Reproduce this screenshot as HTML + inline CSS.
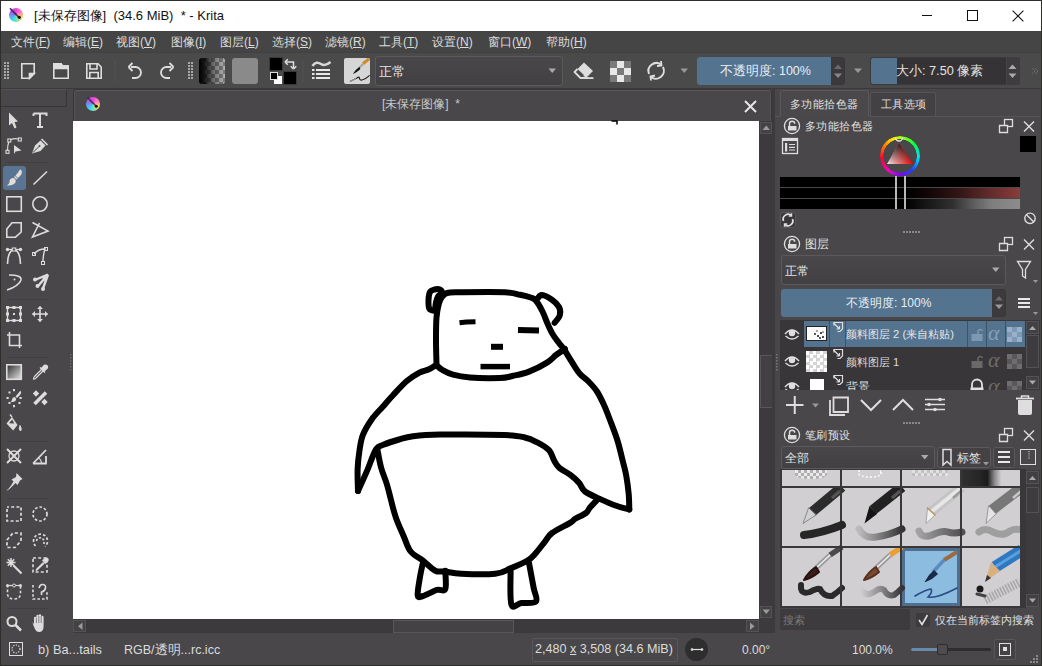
<!DOCTYPE html>
<html><head><meta charset="utf-8">
<style>
*{box-sizing:border-box}
html,body{margin:0;padding:0}
body{width:1042px;height:666px;position:relative;overflow:hidden;background:#2e2e2a;font-family:"Liberation Sans",sans-serif;color:#dcdcdc;font-size:12px}
.a{position:absolute}
.t{position:absolute;white-space:nowrap;line-height:1}
svg{position:absolute;overflow:visible}
</style></head><body>
<!-- window -->
<div class="a" style="left:1px;top:1px;width:1040px;height:664px;background:#494749"></div>
<!-- title bar -->
<div class="a" style="left:1px;top:1px;width:1040px;height:30px;background:#ffffff"></div>
<!-- menu bar -->
<div class="a" style="left:1px;top:31px;width:1040px;height:22px;background:#454545;border-bottom:1px solid #404040"></div>
<!-- toolbar -->
<div class="a" style="left:1px;top:53px;width:1040px;height:36px;background:#4a4a4a;border-bottom:1px solid #3a3a3a"></div>
<!-- left toolbox -->
<div class="a" style="left:1px;top:89px;width:72px;height:544px;background:#494749"></div>
<!-- MDI area -->
<div class="a" style="left:73px;top:89px;width:705px;height:544px;background:#484748"></div>
<!-- canvas header -->
<div class="a" style="left:73px;top:89px;width:699px;height:32px;background:#494749;border:1px solid #383638;border-bottom:none;border-radius:4px 4px 0 0"></div>
<!-- canvas -->
<div class="a" style="left:73px;top:121px;width:687px;height:498px;background:#ffffff"></div>
<!-- right docker -->
<div class="a" style="left:778px;top:89px;width:262px;height:544px;background:#494749"></div>
<!-- status bar -->
<div class="a" style="left:1px;top:633px;width:1040px;height:32px;background:#494749"></div>

<!-- ===== TITLE ===== -->
<div class="a" style="left:9px;top:8px;width:14px;height:14px;border-radius:50%;background:conic-gradient(from 0deg,#f040e0 0deg,#ff80c0 60deg,#ffd060 110deg,#a0e0a0 160deg,#40e0e0 200deg,#60a0f0 260deg,#a060e0 300deg,#f040e0 360deg)"></div>
<svg style="left:0;top:0" width="40" height="32"><path d="M10.5 8.8 L18 16.3" stroke="#3a2050" stroke-width="1.8" stroke-linecap="round" opacity=".85"/><circle cx="19.3" cy="17.3" r="1.6" fill="#111"/></svg>
<div class="t" style="left:34px;top:9px;font-size:13px;color:#111">[未保存图像]&nbsp;&nbsp;(34.6 MiB)&nbsp;&nbsp;* - Krita</div>
<svg style="left:0;top:0" width="1042" height="32">
<path d="M922 15.5 H932" stroke="#111" stroke-width="1"/>
<rect x="967.5" y="10.5" width="10" height="10" fill="none" stroke="#111" stroke-width="1"/>
<path d="M1012.6 10.6 L1023.4 21.4 M1023.4 10.6 L1012.6 21.4" stroke="#111" stroke-width="1.1"/>
</svg>
<!-- ===== MENU ===== -->
<div class="t" style="left:11px;top:36px">文件(<u>F</u>)</div>
<div class="t" style="left:63px;top:36px">编辑(<u>E</u>)</div>
<div class="t" style="left:116px;top:36px">视图(<u>V</u>)</div>
<div class="t" style="left:171px;top:36px">图像(<u>I</u>)</div>
<div class="t" style="left:220px;top:36px">图层(<u>L</u>)</div>
<div class="t" style="left:272px;top:36px">选择(<u>S</u>)</div>
<div class="t" style="left:325px;top:36px">滤镜(<u>R</u>)</div>
<div class="t" style="left:379px;top:36px">工具(<u>T</u>)</div>
<div class="t" style="left:432px;top:36px">设置(<u>N</u>)</div>
<div class="t" style="left:488px;top:36px">窗口(<u>W</u>)</div>
<div class="t" style="left:546px;top:36px">帮助(<u>H</u>)</div>

<!-- ===== TOOLBAR ===== -->
<svg style="left:0;top:0" width="1042" height="90" fill="none" stroke="#dedede" stroke-width="1.6">
<g fill="#a8a8a8" stroke="none">
<rect x="4" y="62" width="2" height="2"/><rect x="7" y="62" width="2" height="2"/>
<rect x="4" y="65" width="2" height="2"/><rect x="7" y="65" width="2" height="2"/>
<rect x="4" y="68" width="2" height="2"/><rect x="7" y="68" width="2" height="2"/>
<rect x="4" y="71" width="2" height="2"/><rect x="7" y="71" width="2" height="2"/>
<rect x="4" y="74" width="2" height="2"/><rect x="7" y="74" width="2" height="2"/>
<rect x="4" y="77" width="2" height="2"/><rect x="7" y="77" width="2" height="2"/>
<rect x="188" y="62" width="2" height="2"/><rect x="191" y="62" width="2" height="2"/>
<rect x="188" y="65" width="2" height="2"/><rect x="191" y="65" width="2" height="2"/>
<rect x="188" y="68" width="2" height="2"/><rect x="191" y="68" width="2" height="2"/>
<rect x="188" y="71" width="2" height="2"/><rect x="191" y="71" width="2" height="2"/>
<rect x="188" y="74" width="2" height="2"/><rect x="191" y="74" width="2" height="2"/>
<rect x="188" y="77" width="2" height="2"/><rect x="191" y="77" width="2" height="2"/>
</g>
<!-- new -->
<path d="M21.8 63.8 H34.2 V73.5 L29.5 78.2 H21.8 Z"/>
<path d="M34.2 73.5 L29.5 78.2 V73.5 Z" fill="#dedede"/>
<!-- open -->
<path d="M53.8 63.8 H61 L62.5 66 H68.2 V78.2 H53.8 Z"/>
<path d="M53.8 63.8 H61 L62.5 66 H68.2 V68.5 H53.8 Z" fill="#dedede"/>
<!-- save -->
<path d="M86.8 63.8 H98 L101.2 67 V78.2 H86.8 Z"/>
<path d="M90 63.8 V69 H97 V63.8"/>
<path d="M89.8 78.2 V72.5 H98.2 V78.2"/>
<!-- separator -->
<path d="M115 60 V82" stroke="#545254" stroke-width="1"/>
<!-- undo -->
<path d="M131 67 H135.5 A5.5 5.5 0 0 1 135.5 78 H132" stroke-width="1.8"/>
<path d="M128.5 67 L132.5 63 M128.5 67 L132.5 71" stroke-width="1.8"/>
<!-- redo -->
<path d="M171 67 H166.5 A5.5 5.5 0 0 0 166.5 78 H170" stroke-width="1.8"/>
<path d="M173.5 67 L169.5 63 M173.5 67 L169.5 71" stroke-width="1.8"/>
<!-- separator -->
<path d="M303 60 V82" stroke="#545254" stroke-width="1"/>
</svg>
<!-- gradient swatch -->
<div class="a" style="left:199px;top:58px;width:26px;height:26px;border-radius:3px;background:linear-gradient(90deg,#000 0%,rgba(0,0,0,.85) 22%,rgba(0,0,0,.35) 60%,rgba(0,0,0,0) 100%),repeating-conic-gradient(#7a7a7a 0 25%,#b4b4b4 0 50%) 0 0/8px 8px"></div>
<!-- pattern swatch -->
<div class="a" style="left:232px;top:58px;width:26px;height:26px;border-radius:3px;background:#8a8a8a"></div>
<!-- fg/bg colors -->
<div class="a" style="left:270px;top:58px;width:12px;height:12px;background:#000;outline:1px solid #3a383a"></div>
<div class="a" style="left:284px;top:72px;width:12px;height:12px;background:#000;outline:1px solid #3a383a"></div>
<div class="a" style="left:274px;top:76px;width:8px;height:8px;background:#fff"></div>
<div class="a" style="left:270px;top:72px;width:8px;height:8px;background:#000;border:1px solid #ddd"></div>
<svg style="left:0;top:0" width="400" height="90" fill="none" stroke="#dedede" stroke-width="1.5">
<path d="M286 62 H293.5 V68"/>
<path d="M285 62 L287.8 59.2 M285 62 L287.8 64.8" />
<path d="M293.5 69 L290.7 66.2 M293.5 69 L296.3 66.2"/>
<!-- brush stroke presets icon -->
<path d="M312.5 66 C315 62,318 62,321 64 C324 66,327 65,330.5 62" stroke-width="2.6" stroke="#d8d8d8"/>
<g fill="#e8e8e8" stroke="none">
<rect x="312" y="69" width="2.5" height="2"/><rect x="316" y="69" width="14" height="2"/>
<rect x="312" y="73" width="2.5" height="2"/><rect x="316" y="73" width="14" height="2"/>
<rect x="312" y="77" width="2.5" height="2"/><rect x="316" y="77" width="14" height="2"/>
</g>
</svg>
<!-- brush preset -->
<div class="a" style="left:344px;top:58px;width:26px;height:26px;border-radius:2px;background:#d6d6d6;overflow:hidden">
<svg style="left:0;top:0" width="26" height="26" fill="none"><path d="M6 23.5 Q10 21.5,13 20 Q15 18.5,15.3 19.5 Q15.5 22.5,18 22 Q22 21,25.6 17.4" stroke="#222" stroke-width="1.2"/><path d="M6 23.5 Q9 22,12 20.5" stroke="#aaa" stroke-width="1"/><path d="M25 0.8 L19 5.7" stroke="#d08a30" stroke-width="3.2"/><path d="M19 5.9 L15.4 9.8" stroke="#a8a8a8" stroke-width="2.2"/><path d="M15.6 9.6 Q12 12.5,10.8 14.4 Q13.5 13,16 10.6" fill="#111" stroke="#111" stroke-width="1.3"/></svg>
</div>
<!-- blend combo -->
<div class="a" style="left:375px;top:56px;width:188px;height:30px;border:1px solid #5b595b;border-radius:3px;background:linear-gradient(#494749,#424042)"></div>
<div class="t" style="left:379px;top:65px;font-size:13px;color:#e4e4e4">正常</div>
<svg style="left:0;top:0" width="1042" height="90">
<path d="M548.5 68.5 H556 L552.25 73 Z" fill="#aaa"/>
<path d="M680.5 68.5 H688 L684.25 73 Z" fill="#999"/>
<path d="M854 68.5 H862 L858 73 Z" fill="#999"/>
</svg>
<!-- eraser -->
<svg style="left:0;top:0" width="700" height="90">
<path d="M584 62.5 L593 71 L586.5 77.5 L577.5 69 Z" fill="#dedede"/>
<path d="M577.5 69 L574.5 72 L580.5 78 H586.5 L583.5 75" fill="none" stroke="#dedede" stroke-width="1.8" stroke-linejoin="round"/>
<path d="M579 71.5 L584.5 77" stroke="#4a4a4a" stroke-width="1"/>
<rect x="585" y="77.2" width="8.5" height="1.8" fill="#dedede"/>
</svg>
<!-- alpha lock checker -->
<div class="a" style="left:610px;top:61px;width:21px;height:21px;background:repeating-conic-gradient(#e8e8e8 0 25%,#7a7a7a 0 50%) 0 0/14px 14px"></div>
<!-- reload -->
<svg style="left:0;top:0" width="700" height="90" fill="none" stroke="#dedede" stroke-width="2">
<path d="M649 74 A8 8 0 0 1 661 64.5"/>
<path d="M663 67 A8 8 0 0 1 651 77"/>
<path d="M661 61 L661.5 65.5 L657 66" stroke-width="1.8"/>
<path d="M651 80.5 L650.5 76.5 L655 75.5" stroke-width="1.8"/>
</svg>
<!-- opacity slider -->
<div class="a" style="left:697px;top:57px;width:148px;height:28px;border:1px solid #393739;border-radius:3px;background:#3b393b"></div>
<div class="a" style="left:697px;top:57px;width:134px;height:28px;border-radius:3px 0 0 3px;background:#53738f"></div>
<div class="t" style="left:720px;top:65px;font-size:12.5px;color:#e8eef4">不透明度: 100%</div>
<svg style="left:0;top:0" width="1042" height="90">
<path d="M834 69 H842 L838 64.5 Z" fill="#6a6969"/>
<path d="M834 73.5 H842 L838 78 Z" fill="#8a8989"/>
</svg>
<!-- size slider -->
<div class="a" style="left:870px;top:57px;width:150px;height:28px;border:1px solid #3b393b;border-radius:3px;background:#353335"></div>
<div class="a" style="left:871px;top:58px;width:26px;height:26px;border-radius:2px 0 0 2px;background:#53738f"></div>
<div class="a" style="left:1006px;top:57px;width:14px;height:28px;border-left:1px solid #444;background:#3e3c3e;border-radius:0 3px 3px 0"></div>
<div class="t" style="left:896px;top:65px;font-size:12.7px;color:#e4e4e4">大小: 7.50 像素</div>
<svg style="left:0;top:0" width="1042" height="90">
<path d="M1008.5 69 H1016.5 L1012.5 64.5 Z" fill="#aaa"/>
<path d="M1008.5 73.5 H1016.5 L1012.5 78 Z" fill="#aaa"/>
<path d="M1032 68 L1035 71 L1032 74 M1035 68 L1038 71 L1035 74" stroke="#666" fill="none"/>
</svg>

<!-- ===== TOOLBOX ===== -->
<div class="a" style="left:1px;top:89px;width:66px;height:18px;border-top:1px solid #555355;border-right:1px solid #373537;border-bottom:1px solid #373537;background:#494749"></div>
<div class="a" style="left:3px;top:166px;width:23px;height:24px;border-radius:3px;background:#5a7594"></div>
<svg style="left:0;top:0" width="80" height="666" fill="none" stroke="#dcdcdc" stroke-width="1.6">
<g stroke="#413f41" stroke-width="1">
<path d="M7 162.5 H48"/><path d="M7 299.5 H48"/><path d="M7 357.5 H48"/><path d="M7 441.5 H48"/><path d="M7 498.5 H48"/><path d="M7 608.5 H48"/>
</g>
<!-- select shapes -->
<path d="M9 112.5 L18 121.5 L14.5 122 L16.5 127.5 L14.5 128.5 L12 123 L9 125.5 Z" fill="#dcdcdc" stroke="none"/>
<!-- text T -->
<path d="M33.5 113.5 V116 M33.5 113.5 H46.5 V116 M40 113.5 V127 M37 127 H43" stroke-width="2"/>
<!-- edit shapes -->
<path d="M7.5 150.3 Q7.5 145,8.8 142 M10.8 139.8 Q14.5 137.8,18.3 139" stroke-width="1.2"/>
<rect x="6" y="150.3" width="3" height="3" stroke-width="1.1"/><rect x="7.8" y="139" width="3" height="3" stroke-width="1.1"/><rect x="18.3" y="138" width="3" height="3" stroke-width="1.1"/>
<path d="M14 145 L21.5 150.5 L15.5 151.5 L14 154 Z" fill="#dcdcdc" stroke="none"/>
<!-- calligraphy pen -->
<path d="M32 153.5 L35 145.5 L40.5 140.5 L45.5 145.5 L40.5 151 Z" fill="#dcdcdc" stroke="none"/>
<path d="M41.5 139 L47.5 145" stroke-width="1.6"/>
<path d="M33 152.5 L39 146.5" stroke="#494749" stroke-width="1"/>
<circle cx="39.5" cy="146" r="1" fill="#494749" stroke="none"/>
<!-- brush -->
<path d="M20.5 169.5 Q23 171,21 175 L18 178 L15.5 175.5 L18.5 172 Q19 169.5,20.5 169.5 Z" fill="#e6dcd6" stroke="none"/>
<path d="M14.5 176.5 L17 179" stroke="#e6dcd6" stroke-width="1.5"/>
<path d="M13.5 178 Q16.5 179.5,15.5 182.5 Q13 186,7 185.5 Q10 183,9.5 181 Q10 178,13.5 178 Z" fill="#e6dcd6" stroke="none"/>
<!-- line -->
<path d="M33.5 184.5 L47 171.5" stroke-width="1.6"/>
<!-- rectangle -->
<rect x="6.8" y="196.8" width="14.5" height="14.5"/>
<!-- ellipse -->
<circle cx="40" cy="204" r="7.2"/>
<!-- polygon -->
<path d="M6.8 229 L12 222.8 H21.2 V232 L15.5 237.2 H6.8 Z"/>
<!-- polyline -->
<path d="M32.5 222.5 L48 231 L32.5 237 L39.5 223"/>
<!-- bezier -->
<path d="M7.5 264 C7.5 245,20.5 245,20.5 264" stroke-width="1.6"/>
<path d="M7 249.5 H21" stroke-width="1.2"/>
<circle cx="7.5" cy="249.5" r="1.7" fill="#dcdcdc" stroke="none"/><circle cx="20.5" cy="249.5" r="1.7" fill="#dcdcdc" stroke="none"/>
<rect x="12.3" y="248" width="3.4" height="3" fill="#4a4949" stroke-width="1.1"/>
<!-- freehand path -->
<path d="M34 254 Q38 249,45 249 Q43 255,43 262" stroke-width="1.4"/>
<rect x="32.5" y="252.5" width="3" height="3" stroke-width="1"/><rect x="44.5" y="247.5" width="3" height="3" stroke-width="1"/><rect x="41.5" y="261.5" width="3" height="3" stroke-width="1"/>
<!-- dynamic brush -->
<path d="M9 275 Q22 275,21 280 Q19 286,7 290" stroke-width="1.6"/>
<circle cx="14.5" cy="279.5" r="1" fill="#dcdcdc" stroke="none"/>
<!-- multibrush -->
<path d="M48 274.5 L36 279.5 M48 274.5 L38.5 285.5 M48 274.5 L43 288.5" stroke-width="2.4"/>
<path d="M48 274 L41 277 L44.5 280.5 Z" fill="#dcdcdc" stroke="none"/>
<circle cx="35" cy="279.5" r="2" fill="#dcdcdc" stroke="none"/><circle cx="37.5" cy="286" r="2" fill="#dcdcdc" stroke="none"/><circle cx="43" cy="289" r="2" fill="#dcdcdc" stroke="none"/>
<!-- transform -->
<rect x="7.5" y="307.5" width="13" height="13" stroke-width="1.4"/>
<g fill="#dcdcdc" stroke="none"><rect x="6" y="306" width="3" height="3"/><rect x="19" y="306" width="3" height="3"/><rect x="6" y="319" width="3" height="3"/><rect x="19" y="319" width="3" height="3"/><rect x="12.5" y="306" width="3" height="3"/><rect x="12.5" y="319" width="3" height="3"/><rect x="6" y="312.5" width="3" height="3"/><rect x="19" y="312.5" width="3" height="3"/><rect x="13" y="313" width="2" height="2"/></g>
<!-- move -->
<path d="M32.5 314 H47.5 M40 306.5 V321.5" stroke-width="1.6"/>
<path d="M32 314 L35 311 V317 Z M48 314 L45 311 V317 Z M40 306 L37 309 H43 Z M40 322 L37 319 H43 Z" fill="#dcdcdc" stroke="none"/>
<!-- crop -->
<path d="M9.5 332 V345.5 H22 M7 335 H19.5 V348" stroke-width="1.6"/>
<!-- gradient -->
<defs><linearGradient id="gr" x1="0" y1="0" x2="1" y2="1"><stop offset="0" stop-color="#2a2a2a"/><stop offset="1" stop-color="#e8e8e8"/></linearGradient></defs>
<rect x="6.8" y="364.8" width="14.5" height="14.5" fill="url(#gr)"/>
<!-- color sampler -->
<path d="M47 365.5 Q48.5 368,45.5 370 L43.5 368 Q45 365,47 365.5 Z" fill="#dcdcdc" stroke="none"/>
<path d="M46.5 364.8 A2.5 2.5 0 0 1 47.8 368.5 L44.5 371.5 L41 368 L44 364.8 A2.5 2.5 0 0 1 46.5 364.8Z" fill="#dcdcdc" stroke="none"/>
<path d="M40 367.5 L45 372.5" stroke-width="1.5"/>
<path d="M43.5 370.5 L36 378 Q34 379.5,33.5 379 Q33 378.5,34.5 376.5 L42 369" stroke-width="1.2"/>
<!-- smart patch -->
<path d="M20.5 391 Q22 392.5,20 395 L17 398 L15.5 396.5 L18.5 393 Q19.5 391,20.5 391 Z" fill="#dcdcdc" stroke="none"/>
<path d="M14.5 397 Q17 398.5,15.8 400.5 Q14 402.5,10.5 402 Q12 400.5,12 399.5 Q12.3 397.2,14.5 397 Z" fill="#dcdcdc" stroke="none"/>
<g fill="#dcdcdc" stroke="none"><rect x="13" y="389" width="2" height="2.2"/><rect x="13" y="405" width="2" height="2.2"/><rect x="6.5" y="397" width="2.2" height="2"/><rect x="19.5" y="397" width="2.2" height="2"/><rect x="8.5" y="391.5" width="2" height="2"/><rect x="18.5" y="402" width="2" height="2"/><rect x="8.5" y="402" width="2" height="2"/></g>
<!-- heal -->
<path d="M32.8 393.5 L36 390.3 L39.2 393.5 L36 396.7 Z M41.3 402 L44.5 398.8 L47.7 402 L44.5 405.2 Z" fill="#dcdcdc" stroke="none"/>
<path d="M34.5 404 L46 392.5" stroke-width="3.6"/>
<!-- fill -->
<path d="M6.5 423.5 L12 417 L17.5 425 L13.2 430.5 Z" fill="#dcdcdc" stroke="none"/>
<path d="M9 423.2 L12.2 419.6 L14.3 423.4 Z" fill="#4a4949" stroke="none"/>
<path d="M12 417 L10 414.5" stroke-width="1.4"/>
<path d="M20 425.5 Q21.8 428.5,21 430.5 Q19.5 431,19.3 428.5 Z" fill="#dcdcdc" stroke-width="1"/>
<!-- assistant tool -->
<circle cx="14" cy="456" r="5" stroke-width="1.3"/>
<path d="M7 449 L21 463 M21 449 L7 463" stroke-width="2"/>
<!-- measure -->
<path d="M33 463.5 L46 450 M33 463.5 H46 V456" stroke-width="1.8"/>
<path d="M38 458 Q41 459,41.5 463" stroke-width="1.2"/>
<!-- reference pin -->
<path d="M16.5 473 L22.5 479 L20 480.5 L17.5 485 L15.5 483 L8 490.5 L13.5 481.5 L11.5 479.5 L16 477 Z" fill="#dcdcdc" stroke="none"/>
<path d="M7 490.5 L13 484.5" stroke-width="0.8"/>
<!-- rect select -->
<rect x="7" y="507" width="14" height="14" stroke-dasharray="3 2.2" stroke-dashoffset="1" stroke-width="1.7"/>
<!-- ellipse select -->
<circle cx="40" cy="514" r="7" stroke-dasharray="2.6 2" stroke-width="1.7"/>
<!-- polygon select -->
<path d="M7 540 L13 533 H21 V541 L15 547.5 H7 Z" stroke-dasharray="3.2 2.3" stroke-width="1.7"/>
<!-- freehand select -->
<path d="M35.5 546 A7 7 0 1 1 45 546.5" stroke-dasharray="2.6 2" stroke-width="1.7"/>
<path d="M36.5 541 A3.8 3.8 0 0 1 44 541 V544" stroke-dasharray="2.2 1.6" stroke-width="1.6"/>
<!-- contiguous select -->
<path d="M13.5 565.5 L21.5 573.5" stroke-width="2.2"/>
<path d="M6.5 562.5 H15.5 M11 558 V567 M7.8 559.3 L14.2 565.7 M14.2 559.3 L7.8 565.7" stroke-width="1.5"/>
<!-- similar select -->
<rect x="33" y="558" width="14" height="14" stroke-dasharray="3 2.2" stroke-width="1.6"/>
<path d="M46 557.5 A2.5 2.5 0 0 1 48.5 561 L45.5 564 L42 560.5 L45 557.8 Z" fill="#dcdcdc" stroke="none"/>
<path d="M43.5 562.5 L37 569 L36 570.5 L37.5 569.5 L44.2 563" stroke-width="1.3"/>
<!-- bezier select -->
<path d="M7.5 585 V594 Q8 599,14 599 Q20 599,20.5 594 V585" stroke-dasharray="2.6 2" stroke-width="1.6"/>
<path d="M7 585.5 H21" stroke-width="1.2"/><circle cx="7.5" cy="585.5" r="1.5" fill="#dcdcdc" stroke="none"/><circle cx="20.5" cy="585.5" r="1.5" fill="#dcdcdc" stroke="none"/><circle cx="14" cy="585.5" r="1.5" fill="#494749" stroke-width="1"/>
<!-- magnetic select -->
<path d="M33 585 V599 H47 V592" stroke-dasharray="2.6 2" stroke-width="1.6"/>
<path d="M39 588 Q40 584,43 584.5 Q46 585,45.5 588 Q45 591,41.5 592 V595" stroke-width="1.6"/>
<!-- zoom -->
<circle cx="12" cy="621.5" r="4.5" stroke-width="2"/>
<path d="M15.5 625 L21 630.5" stroke-width="2.6"/>
<!-- hand -->
<path d="M34 624 V618 Q34 616.8,35.2 616.8 Q36.4 616.8,36.4 618 V622 V616 Q36.4 614.8,37.6 614.8 Q38.8 614.8,38.8 616 V622 V615.5 Q38.8 614.3,40 614.3 Q41.2 614.3,41.2 615.5 V622 V617 Q41.2 615.8,42.4 615.8 Q43.6 615.8,43.6 617 V626 Q43.6 632,39 632 Q36 632,34.5 628 Q33 625,32.5 622 Z" fill="#dcdcdc" stroke="none"/>
<path d="M36.4 618 V623 M38.8 616 V623 M41.2 616 V623" stroke="#494749" stroke-width="0.6"/>
<!-- splitter dots right of toolbox -->
<g fill="#6a6969" stroke="none">
<rect x="70" y="354" width="1.5" height="1.5"/><rect x="70" y="357" width="1.5" height="1.5"/><rect x="70" y="360" width="1.5" height="1.5"/><rect x="70" y="363" width="1.5" height="1.5"/><rect x="70" y="366" width="1.5" height="1.5"/><rect x="70" y="369" width="1.5" height="1.5"/>
</g>
</svg>

<!-- ===== CANVAS HEADER ===== -->
<div class="a" style="left:74px;top:90px;width:697px;height:31px;border-top:1px solid #595759;border-left:1px solid #545254;border-right:1px solid #545254;border-radius:3px 3px 0 0"></div>
<div class="a" style="left:86px;top:97px;width:14px;height:14px;border-radius:50%;background:conic-gradient(from 0deg,#f040e0 0deg,#ff80c0 60deg,#ffd060 110deg,#a0e0a0 160deg,#40e0e0 200deg,#60a0f0 260deg,#a060e0 300deg,#f040e0 360deg)"></div>
<svg style="left:0;top:0" width="800" height="130"><path d="M88 98 L95 105" stroke="#3a2050" stroke-width="1.7" stroke-linecap="round" opacity=".85"/><circle cx="96.3" cy="106.3" r="1.5" fill="#111"/>
<path d="M745 101 L756 112 M756 101 L745 112" stroke="#e6e6e6" stroke-width="2"/></svg>
<div class="t" style="left:382px;top:98px;font-size:12px;color:#c8c8c8">[未保存图像]&nbsp;&nbsp;*</div>
<!-- scrollbars -->
<div class="a" style="left:759px;top:121px;width:14px;height:498px;background:#3c3a3c"></div>
<div class="a" style="left:760px;top:122px;width:12px;height:12px;border:1px solid #545254;background:#444244"></div>
<div class="a" style="left:760px;top:606px;width:12px;height:12px;border:1px solid #545254;background:#444244"></div>
<div class="a" style="left:760px;top:355px;width:13px;height:53px;border:1px solid #595759;background:#424042"></div>
<div class="a" style="left:73px;top:619px;width:700px;height:14px;background:#3c3a3c"></div>
<div class="a" style="left:73px;top:620px;width:13px;height:12px;border:1px solid #545254;background:#444244"></div>
<div class="a" style="left:746px;top:620px;width:13px;height:12px;border:1px solid #545254;background:#444244"></div>
<div class="a" style="left:393px;top:620px;width:121px;height:13px;border:1px solid #595759;background:#444244"></div>
<svg style="left:0;top:0" width="800" height="640">
<path d="M762.5 130 H770 L766.25 125.5 Z" fill="#9a9a9a"/>
<path d="M762.5 609.5 H770 L766.25 614 Z" fill="#9a9a9a"/>
<path d="M82.5 622.5 V630 L78 626.25 Z" fill="#9a9a9a"/>
<path d="M750 622.5 V630 L754.5 626.25 Z" fill="#9a9a9a"/>
<g fill="#777" ><rect x="776" y="354" width="1.5" height="1.5"/><rect x="776" y="357" width="1.5" height="1.5"/><rect x="776" y="360" width="1.5" height="1.5"/><rect x="776" y="363" width="1.5" height="1.5"/><rect x="776" y="366" width="1.5" height="1.5"/><rect x="776" y="369" width="1.5" height="1.5"/></g>
</svg>
<!-- ===== DRAWING ===== -->
<svg style="left:0;top:0" width="800" height="640" fill="none" stroke="#000" stroke-width="6" stroke-linecap="round" stroke-linejoin="round">
<path d="M612 121 H617 V124" stroke-width="1.5"/>
<path d="M435.0 311.0 C434.1 310.7 430.6 310.8 429.5 309.0 C428.4 307.2 428.4 302.8 428.5 300.0 C428.6 297.2 429.0 293.8 430.0 292.0 C431.0 290.2 432.8 289.9 434.5 289.5 C436.2 289.1 438.8 289.0 440.0 289.5 C441.2 290.0 442.3 291.3 442.0 292.5 C441.7 293.7 439.0 294.8 438.0 296.5 C437.0 298.2 436.5 300.2 436.0 302.5 C435.5 304.8 435.2 308.8 435.0 310.0"/>
<path d="M436.5 364.0 C436.4 360.0 436.0 347.8 436.0 340.0 C436.0 332.2 436.0 323.5 436.5 317.5 C437.0 311.5 437.9 307.4 438.8 304.0 C439.7 300.6 440.6 298.8 442.0 297.0 C443.4 295.2 444.0 293.8 447.0 293.0 C450.0 292.2 450.3 292.4 460.0 292.3 C469.7 292.2 495.0 291.9 505.0 292.3 C515.0 292.7 515.7 293.9 520.0 294.8 C524.3 295.7 528.0 296.6 530.6 297.5 C533.2 298.4 533.8 298.2 535.8 300.5 C537.8 302.8 540.5 307.5 542.5 311.5 C544.5 315.5 546.0 320.4 547.8 324.3 C549.5 328.2 551.1 331.7 553.0 334.8 C554.9 337.9 557.1 340.5 559.0 343.0 C560.9 345.5 562.0 346.5 564.3 349.8 C566.5 353.1 569.9 359.0 572.5 363.0 C575.1 367.0 577.2 370.8 580.0 374.0 C582.8 377.2 586.2 379.1 589.0 382.0 C591.8 384.9 594.5 387.7 597.0 391.5 C599.5 395.3 601.8 400.2 604.0 405.0 C606.2 409.8 607.8 414.2 610.0 420.0 C612.2 425.8 615.2 433.3 617.3 440.0 C619.4 446.7 621.0 454.0 622.5 460.0 C624.0 466.0 625.3 470.3 626.3 476.0 C627.3 481.7 628.2 488.4 628.7 494.0 C629.2 499.6 629.2 506.9 629.3 509.5"/>
<path d="M629.3 509.5 C626.8 508.8 618.9 506.8 614.0 505.0 C609.1 503.2 604.8 501.2 600.0 499.0 C595.2 496.8 588.5 494.2 585.0 491.5 C581.5 488.8 581.5 485.7 579.2 483.0 C576.9 480.3 574.4 478.0 571.0 475.4 C567.6 472.8 561.8 469.9 559.0 467.4 C556.2 464.9 555.7 463.2 554.0 460.3 C552.3 457.4 551.9 453.2 549.0 450.2 C546.1 447.2 540.8 444.3 536.8 442.2 C532.8 440.1 530.2 438.7 524.8 437.5 C519.4 436.3 518.7 435.5 504.6 435.0 C490.5 434.5 455.3 434.4 440.0 434.6 C424.7 434.8 419.8 435.4 413.0 436.2 C406.2 437.0 403.8 438.1 399.0 439.5 C394.2 440.9 387.8 442.9 384.0 444.6 C380.2 446.3 378.9 445.0 376.0 449.5 C373.1 454.0 369.8 464.5 366.8 471.4 C363.8 478.3 359.5 487.7 358.0 491.0"/>
<path d="M358.0 491.0 C357.9 487.4 357.4 476.1 357.6 469.3 C357.9 462.5 358.6 456.2 359.5 450.4 C360.4 444.6 360.9 439.9 363.0 434.7 C365.1 429.5 368.7 423.7 372.0 419.0 C375.3 414.3 379.5 410.5 383.0 406.5 C386.5 402.5 389.0 399.4 393.0 395.2 C397.0 390.9 402.4 384.8 406.8 381.0 C411.2 377.2 415.7 374.6 419.4 372.6 C423.1 370.7 426.2 370.6 429.0 369.3 C431.8 368.0 434.8 365.7 436.0 365.0"/>
<path d="M436.0 365.0 C437.1 365.8 439.7 368.4 442.5 370.0 C445.3 371.6 448.4 373.4 453.0 374.6 C457.6 375.9 462.2 376.9 470.0 377.5 C477.8 378.1 492.9 378.2 500.0 378.0 C507.1 377.8 507.7 377.1 512.5 376.0 C517.3 374.9 523.2 373.8 529.0 371.6 C534.8 369.4 542.5 365.4 547.0 362.6 C551.5 359.8 553.0 357.3 556.0 355.0 C559.0 352.7 563.5 350.0 565.0 349.0"/>
<path d="M538.0 298.0 C538.6 297.5 539.5 294.8 541.8 295.0 C544.1 295.2 548.7 297.5 551.6 299.5 C554.5 301.5 557.6 304.4 559.0 307.0 C560.4 309.6 560.5 312.7 559.8 315.3 C559.1 317.9 555.5 321.6 554.6 322.8"/>
<path d="M377.5 450.0 C378.1 453.0 379.6 462.3 381.2 468.0 C382.8 473.7 385.2 478.7 386.8 484.0 C388.4 489.3 389.5 494.3 391.0 500.0 C392.5 505.7 393.8 511.8 396.0 518.0 C398.2 524.2 401.6 531.4 404.0 537.0 C406.4 542.6 407.5 547.5 410.7 551.5 C413.9 555.5 418.9 557.5 423.0 560.7 C427.1 563.9 431.7 568.9 435.3 570.7 C438.9 572.5 440.1 571.0 444.5 571.5 C448.9 572.0 452.9 573.4 461.4 573.8 C469.8 574.2 487.0 574.7 495.2 573.8 C503.4 572.9 505.2 570.6 510.6 568.4 C516.0 566.2 523.4 563.1 527.5 560.7 C531.6 558.3 532.4 556.9 535.2 553.8 C538.0 550.7 541.6 545.8 544.4 542.3 C547.2 538.8 547.6 536.3 552.0 533.0 C556.4 529.7 566.6 525.0 570.5 522.6 C574.4 520.2 572.6 520.4 575.2 518.8 C577.8 517.2 583.5 514.9 586.0 513.0 C588.5 511.1 588.0 509.8 590.0 507.5 C592.0 505.2 596.7 500.4 598.0 499.0"/>
<path d="M423.0 562.3 C422.5 564.7 420.9 571.4 420.0 576.9 C419.1 582.4 417.2 592.1 417.7 595.3 C418.2 598.5 419.8 596.9 423.0 596.0 C426.2 595.1 433.2 591.0 436.9 589.9 C440.6 588.8 443.9 592.3 445.3 589.1 C446.7 585.9 445.3 573.8 445.3 570.7"/>
<path d="M510.6 570.7 C510.7 576.3 509.6 599.1 511.4 604.5 C513.2 609.9 517.2 603.5 521.3 603.0 C525.4 602.5 534.0 604.0 536.0 601.4 C538.0 598.8 534.8 594.0 533.6 587.6 C532.4 581.2 529.8 567.1 529.0 563.0"/>
<path d="M459.5 322.8 L466.5 322 L475.5 321.8" stroke-width="5" stroke-linecap="butt"/>
<path d="M518 330 L539 330.5" stroke-width="6" stroke-linecap="butt"/>
<path d="M491 346.8 H503" stroke-width="6" stroke-linecap="butt"/>
<path d="M480.5 366.6 H510" stroke-width="5.5" stroke-linecap="butt"/>
</svg>

<!-- ===== RIGHT DOCKER ===== -->
<div class="a" style="left:772px;top:89px;width:3px;height:544px;background:#3c3a3c"></div>
<!-- tabs -->
<div class="a" style="left:780px;top:90px;width:89px;height:27px;border:1px solid #5a585a;border-bottom:none;border-radius:3px 3px 0 0;background:#4a484a"></div>
<div class="a" style="left:870px;top:92px;width:66px;height:24px;border:1px solid #565456;border-bottom:none;border-radius:3px 3px 0 0;background:#434143"></div>
<div class="a" style="left:775px;top:116px;width:265px;height:1px;background:#565456"></div>
<div class="a" style="left:780px;top:116px;width:89px;height:1px;background:#4a484a"></div>
<div class="t" style="left:790px;top:99px;font-size:11px;letter-spacing:0.4px;color:#e0e0e0">多功能拾色器</div>
<div class="t" style="left:881px;top:99px;font-size:11px;letter-spacing:0.4px;color:#e0e0e0">工具选项</div>
<!-- docker title icons -->
<svg style="left:0;top:0" width="1042" height="640" fill="none" stroke="#dedede" stroke-width="1.3">
<!-- lock icons -->
<g id="lk">
<circle cx="792" cy="126" r="7.6"/>
<path d="M789.5 126 V123.8 A2.6 2.6 0 0 1 794.7 123.8" stroke-width="1.4"/>
<rect x="788" y="126" width="8.5" height="4.5" fill="#dedede" stroke="none"/>
</g>
<use href="#lk" y="118"/>
<use href="#lk" y="309"/>
<!-- float + close -->
<g id="fc">
<rect x="1004.5" y="119.5" width="8" height="7"/>
<path d="M999.5 125.5 H1007.5 V132.5 H999.5 Z" fill="#4a484a"/>
<path d="M1024 121.5 L1034 131.5 M1034 121.5 L1024 131.5" stroke-width="1.4"/>
</g>
<use href="#fc" y="118"/>
<use href="#fc" y="309"/>
<!-- settings icon -->
<rect x="782.5" y="138.5" width="15" height="15"/>
<rect x="782.5" y="138.5" width="15" height="2.5" fill="#dedede" stroke="none"/>
<rect x="785" y="143" width="2.2" height="8.5" fill="#dedede" stroke="none"/>
<path d="M789 144.5 H795 M789 147.3 H795 M789 150 H795" stroke-width="1.2"/>
</svg>
<!-- color wheel -->
<div class="a" style="left:880px;top:136px;width:40px;height:40px;border-radius:50%;background:conic-gradient(from 0deg,#b0ff00 0deg,#00ff40 50deg,#00e0ff 95deg,#2040ff 140deg,#8000ff 180deg,#ff00c0 220deg,#ff0030 262deg,#ff8000 305deg,#ffe000 335deg,#b0ff00 360deg);-webkit-mask:radial-gradient(circle,transparent 16.5px,#000 17px);mask:radial-gradient(circle,transparent 16.5px,#000 17px)"></div>
<svg style="left:0;top:0" width="1042" height="640">
<defs>
<linearGradient id="tri1" x1="0" y1="1" x2="1" y2="1"><stop offset="0" stop-color="#f4e8e8"/><stop offset="1" stop-color="#e80000"/></linearGradient>
<linearGradient id="tri2" x1="0.5" y1="0" x2="0.5" y2="1"><stop offset="0" stop-color="#000"/><stop offset="1" stop-color="rgba(0,0,0,0)"/></linearGradient>
</defs>
<path d="M899 143 L913.5 164 H887 Z" fill="url(#tri1)"/>
<path d="M899 143 L913.5 164 H887 Z" fill="url(#tri2)" opacity="0.8"/>
<path d="M895.5 137.5 A3.5 3.5 0 0 0 902.5 137.5" fill="none" stroke="#e8e8e8" stroke-width="1.3"/>
</svg>
<div class="a" style="left:1020px;top:136px;width:16px;height:16px;background:#000"></div>
<!-- bars -->
<div class="a" style="left:780px;top:177px;width:240px;height:10px;background:#000"></div>
<div class="a" style="left:780px;top:188px;width:240px;height:10px;background:linear-gradient(90deg,#000 0%,#000 52%,#120606 62%,#351616 75%,#642c2c 88%,#8a3c3c 100%)"></div>
<div class="a" style="left:780px;top:199px;width:240px;height:10px;background:linear-gradient(90deg,#000 0%,#000 52%,#141414 60%,#303030 72%,#5a5a5a 80%,#7e7e7e 88%,#8c8c8c 100%)"></div>
<div class="a" style="left:895px;top:176px;width:11px;height:33px;border-left:2px solid #b8b8b8;border-right:2px solid #b8b8b8"></div>
<div class="a" style="left:780px;top:212px;width:16px;height:16px;border-radius:3px;background:#393739;border:1px solid #595759"></div>
<svg style="left:0;top:0" width="1042" height="640" fill="none" stroke="#dedede" stroke-width="1.8">
<path d="M783.5 221 A5 5 0 0 1 791.5 215.5"/>
<path d="M792.5 219 A5 5 0 0 1 784.5 224.5"/>
<path d="M791.5 213.2 V216 H788.8 M784.5 226.8 V224 H787.2" stroke-width="1.5"/>
<circle cx="1030" cy="218.3" r="5.2" stroke-width="1.4"/>
<path d="M1026.5 214.8 L1033.5 221.8" stroke-width="1.4"/>
<g fill="#8a8989" stroke="none">
<rect x="903" y="231" width="2" height="2"/><rect x="906" y="231" width="2" height="2"/><rect x="909" y="231" width="2" height="2"/><rect x="912" y="231" width="2" height="2"/><rect x="915" y="231" width="2" height="2"/><rect x="918" y="231" width="2" height="2"/>
<rect x="903" y="422" width="2" height="2"/><rect x="906" y="422" width="2" height="2"/><rect x="909" y="422" width="2" height="2"/><rect x="912" y="422" width="2" height="2"/><rect x="915" y="422" width="2" height="2"/><rect x="918" y="422" width="2" height="2"/>
</g>
</svg>
<!-- layers title -->
<div class="t" style="left:805px;top:238px;font-size:12px;color:#e0e0e0">图层</div>
<div class="a" style="left:781px;top:255px;width:225px;height:30px;border:1px solid #5b595b;border-radius:3px;background:linear-gradient(#494749,#424042)"></div>
<div class="t" style="left:785px;top:265px;font-size:12px;color:#e4e4e4">正常</div>
<div class="a" style="left:781px;top:289px;width:225px;height:28px;border:1px solid #393739;border-radius:3px;background:#3c3a3c"></div>
<div class="a" style="left:781px;top:289px;width:211px;height:28px;border-radius:3px 0 0 3px;background:#53738f"></div>
<div class="t" style="left:846px;top:297px;font-size:12px;color:#e8eef4">不透明度: 100%</div>
<svg style="left:0;top:0" width="1042" height="640">
<path d="M992 267.5 H999.5 L995.75 272 Z" fill="#aaa"/>
<path d="M995 300.5 H1003 L999 296 Z" fill="#6a6969"/>
<path d="M995 304.5 H1003 L999 309 Z" fill="#9a9a9a"/>
<path d="M1017.5 261.5 H1030.5 L1025.5 269.5 V278 L1022.5 276 V269.5 Z" fill="none" stroke="#dedede" stroke-width="1.3"/>
<path d="M1033 280 H1038 L1035.5 283 Z" fill="#999"/>
<path d="M1018 299 H1030 M1018 303 H1030 M1018 307 H1030" stroke="#e8e8e8" stroke-width="2"/>
<path d="M1033 312 H1038 L1035.5 315 Z" fill="#999"/>
</svg>

<div class="t" style="left:805px;top:121px;font-size:11px;letter-spacing:0.4px;color:#e0e0e0">多功能拾色器</div>
<!-- ===== LAYERS LIST ===== -->
<div class="a" style="left:780px;top:320px;width:260px;height:70px;background:#383638"></div>
<div class="a" style="left:804px;top:321px;width:221px;height:26px;background:#53738f"></div>
<div class="a" style="left:829px;top:321px;width:1px;height:26px;background:#3f5366"></div>
<div class="a" style="left:845px;top:321px;width:1px;height:26px;background:#3f5366"></div>
<div class="a" style="left:967px;top:321px;width:1px;height:26px;background:#3f5366"></div>
<div class="a" style="left:986px;top:321px;width:1px;height:26px;background:#3f5366"></div>
<div class="a" style="left:1005px;top:321px;width:1px;height:26px;background:#3f5366"></div>
<!-- thumbs -->
<div class="a" style="left:806px;top:326px;width:21px;height:15px;background:#fafafa;border:1px solid #222"></div>
<svg style="left:0;top:0" width="1042" height="640">
<g fill="#111"><circle cx="815" cy="334" r="0.9"/><circle cx="818" cy="336" r="1"/><circle cx="821" cy="333" r="1"/><circle cx="820" cy="338" r="0.9"/><circle cx="823" cy="337" r="1"/><circle cx="817" cy="331" r="0.7"/><circle cx="823" cy="332" r="0.7"/></g>
</svg>
<div class="a" style="left:806px;top:351px;width:21px;height:21px;background:repeating-conic-gradient(#d4d4d4 0 25%,#ffffff 0 50%) 0 0/7px 7px"></div>
<div class="a" style="left:810px;top:379px;width:14px;height:11px;background:#fff"></div>
<div class="t" style="left:846px;top:329px;font-size:11.2px;color:#e6e6e6">颜料图层 2 (来自粘贴)</div>
<div class="t" style="left:846px;top:357px;font-size:11.2px;color:#dcdcdc">颜料图层 1</div>
<div class="a" style="left:780px;top:374px;width:246px;height:16px;overflow:hidden"><div class="t" style="left:66px;top:7px;font-size:12px;color:#dcdcdc">背景</div></div>
<svg style="left:0;top:0" width="1042" height="640" fill="none" stroke="#dedede" stroke-width="1.3">
<defs><clipPath id="lc"><rect x="780" y="320" width="246" height="70"/></clipPath></defs>
<g clip-path="url(#lc)">
<g id="eye">
<path d="M785 334 Q792 326,799 334" stroke-width="1.6"/>
<path d="M785.5 336 Q792 342,798.5 336" stroke-width="1.3"/>
<circle cx="792" cy="333" r="3.2" fill="#dedede" stroke="none"/>
</g>
<use href="#eye" y="27"/>
<use href="#eye" y="53"/>
<g id="inh">
<path d="M834 325.5 V322.5 H842.5 V329 L840 331.5 H837.5" stroke-width="1.2"/>
<path d="M833.5 323 L839.5 329 M839.5 329 V326 M839.5 329 H836.5" stroke-width="1.2"/>
</g>
<use href="#inh" y="27"/>
<use href="#inh" y="53"/>
<!-- lock col -->
<path d="M971.5 334 H982.5 V341 H971.5 Z" fill="#7f98b2" stroke="none"/>
<path d="M978 334 V331 A2.5 2.5 0 0 1 982.5 331" stroke="#7f98b2" stroke-width="1.5"/>
<path d="M971.5 361 H982.5 V368 H971.5 Z" fill="#6a6969" stroke="none"/>
<path d="M978 361 V358 A2.5 2.5 0 0 1 982.5 358" stroke="#6a6969" stroke-width="1.5"/>
<path d="M972 388 V384.5 A5 5 0 0 1 982 384.5 V388" stroke="#e0e0e0" stroke-width="1.8"/>
<rect x="970.5" y="387.5" width="13" height="3" fill="#e0e0e0" stroke="none"/>
</g>
</svg>
<div class="t" style="left:988px;top:322px;font-size:22px;font-style:italic;color:#86a0bb;font-family:'Liberation Serif',serif">α</div>
<div class="t" style="left:988px;top:349px;font-size:22px;font-style:italic;color:#6e6d6d;font-family:'Liberation Serif',serif">α</div>
<div class="a" style="left:980px;top:374px;width:46px;height:16px;overflow:hidden"><div class="t" style="left:8px;top:1px;font-size:22px;font-style:italic;color:#6e6d6d;font-family:'Liberation Serif',serif">α</div></div>
<div class="a" style="left:1007px;top:327px;width:15px;height:15px;background:repeating-conic-gradient(#7d99b5 0 25%,#99b0c8 0 50%) 0 0/10px 10px"></div>
<div class="a" style="left:1007px;top:354px;width:15px;height:15px;background:repeating-conic-gradient(#595759 0 25%,#6f6e6e 0 50%) 0 0/10px 10px"></div>
<div class="a" style="left:1007px;top:381px;width:15px;height:9px;background:repeating-conic-gradient(#595759 0 25%,#6f6e6e 0 50%) 0 0/10px 10px"></div>
<!-- layer scrollbar -->
<div class="a" style="left:1026px;top:320px;width:14px;height:70px;background:#393739"></div>
<div class="a" style="left:1026px;top:321px;width:13px;height:13px;border:1px solid #545254;background:#424042"></div>
<div class="a" style="left:1026px;top:335px;width:13px;height:33px;border:1px solid #545254;background:#3e3c3e"></div>
<div class="a" style="left:1026px;top:376px;width:13px;height:13px;border:1px solid #545254;background:#424042"></div>
<svg style="left:0;top:0" width="1042" height="640">
<path d="M1029 330 H1036 L1032.5 326 Z" fill="#aaa"/>
<path d="M1029 380.5 H1036 L1032.5 384.5 Z" fill="#aaa"/>
</svg>
<!-- layer bottom toolbar -->
<svg style="left:0;top:0" width="1042" height="640" fill="none" stroke="#dedede" stroke-width="2">
<path d="M786 405 H803.5 M794.75 396 V414"/>
<path d="M812 403.5 H819 L815.5 407.5 Z" fill="#999" stroke="none"/>
<path d="M833.5 397.5 H848 V412 H833.5 Z" stroke-width="1.8"/>
<path d="M830 400 V415 H845" stroke-width="1.8"/>
<path d="M861 400 L871 410 L881 400"/>
<path d="M893 410 L903 400 L913 410"/>
<path d="M925 399.5 H945 M925 404.5 H945 M925 409.5 H945" stroke-width="1.5"/>
<g fill="#dedede" stroke="none"><circle cx="940" cy="399.5" r="1.8"/><circle cx="929" cy="404.5" r="1.8"/><circle cx="935" cy="409.5" r="1.8"/></g>
<path d="M1016 398.5 H1034" stroke-width="1.8"/>
<path d="M1021.5 398 V396 H1028.5 V398" stroke-width="1.5"/>
<path d="M1018 400 H1032 V413 Q1032 415,1030 415 H1020 Q1018 415,1018 413 Z" fill="#dedede" stroke="none"/>
</svg>

<!-- ===== BRUSH PRESETS ===== -->
<div class="t" style="left:805px;top:430px;font-size:11px;letter-spacing:0.4px;color:#e0e0e0">笔刷预设</div>
<div class="a" style="left:781px;top:446px;width:154px;height:23px;border:1px solid #5b595b;border-radius:3px;background:linear-gradient(#494749,#424042)"></div>
<div class="t" style="left:785px;top:452px;font-size:12px;color:#e4e4e4">全部</div>
<div class="a" style="left:937px;top:447px;width:54px;height:21px;border:1px solid #5b595b;border-radius:3px;background:#444244"></div>
<div class="t" style="left:957px;top:452px;font-size:12px;color:#e4e4e4">标签</div>
<div class="a" style="left:993px;top:447px;width:22px;height:21px;border:1px solid #5b595b;border-radius:3px;background:#444244"></div>
<div class="a" style="left:1020px;top:449px;width:16px;height:16px;border:1.3px solid #dedede"></div>
<div class="a" style="left:780px;top:469px;width:246px;height:139px;background:#393739"></div>
<div class="a" style="left:782px;top:470px;width:58px;height:16px;background:#d1cfd2"></div>
<div class="a" style="left:842px;top:470px;width:58px;height:16px;background:#d1cfd2"></div>
<div class="a" style="left:902px;top:470px;width:58px;height:16px;background:#d1cfd2"></div>
<div class="a" style="left:962px;top:470px;width:58px;height:16px;background:#d1cfd2"></div>
<div class="a" style="left:782px;top:488px;width:58px;height:58px;background:#d1cfd2"></div>
<div class="a" style="left:842px;top:488px;width:58px;height:58px;background:#d1cfd2"></div>
<div class="a" style="left:902px;top:488px;width:58px;height:58px;background:#d1cfd2"></div>
<div class="a" style="left:962px;top:488px;width:58px;height:58px;background:#d1cfd2"></div>
<div class="a" style="left:782px;top:548px;width:58px;height:58px;background:#d1cfd2"></div>
<div class="a" style="left:842px;top:548px;width:58px;height:58px;background:#d1cfd2"></div>
<div class="a" style="left:902px;top:548px;width:58px;height:58px;background:#d1cfd2"></div>
<div class="a" style="left:962px;top:548px;width:58px;height:58px;background:#d1cfd2"></div>

<div class="a" style="left:902px;top:548px;width:58px;height:58px;background:#4f6f90"></div>
<div class="a" style="left:905px;top:551px;width:52px;height:52px;background:#8cbde0"></div>
<!-- row0 partial patterns -->
<div class="a" style="left:795px;top:470px;width:32px;height:9px;background:repeating-conic-gradient(#a8a8a8 0 25%,#f2f2f2 0 50%) 0 0/6px 6px;border-radius:0 0 50% 50%;opacity:.8"></div>
<div class="a" style="left:858px;top:470px;width:24px;height:8px;border-radius:0 0 50% 50%;border:2px dotted #f4f4f4;border-top:none"></div>
<div class="a" style="left:912px;top:470px;width:36px;height:6px;background:repeating-conic-gradient(#bdbdbd 0 25%,#e8e8e8 0 50%) 0 0/6px 6px;opacity:.7"></div>
<div class="a" style="left:962px;top:470px;width:58px;height:16px;background:linear-gradient(90deg,#303030 0%,#262626 30%,#1c1c1c 44%,#8a8a8a 56%,#d1cfd2 68%)"></div>
<svg style="left:0;top:0" width="1042" height="640" fill="none" stroke-linecap="round">
<defs><clipPath id="tc"><rect x="782" y="488" width="58" height="58"/><rect x="842" y="488" width="58" height="58"/><rect x="902" y="488" width="58" height="58"/><rect x="962" y="488" width="58" height="58"/><rect x="782" y="548" width="58" height="58"/><rect x="842" y="548" width="58" height="58"/><rect x="902" y="548" width="58" height="58"/><rect x="962" y="548" width="58" height="58"/></clipPath></defs><!-- r1 t1 pen -->
<defs>
<linearGradient id="sg2" x1="0" x2="1"><stop offset="0" stop-color="#bbb"/><stop offset="0.4" stop-color="#888"/><stop offset="1" stop-color="#333"/></linearGradient>
<linearGradient id="sg3" x1="0" x2="1"><stop offset="0" stop-color="#9a9a9a"/><stop offset="1" stop-color="#3a383a"/></linearGradient>
<linearGradient id="sg5" x1="0" x2="1"><stop offset="0" stop-color="#cfcfcf"/><stop offset="0.5" stop-color="#888"/><stop offset="1" stop-color="#333"/></linearGradient>
</defs>
<path d="M804 535 Q822 533,842 525" stroke="#262626" stroke-width="8"/>
<g clip-path="url(#tc)"><path d="M842 487 L812 512" stroke="#2c2c2c" stroke-width="10" stroke-linecap="butt"/>
<path d="M840 491 L832 498" stroke="#555" stroke-width="3" stroke-linecap="butt"/>
<path d="M808.5 508 L803 523.5 L816 515 Z" fill="#d0d0d0" stroke="#777" stroke-width="0.8" stroke-linejoin="round"/>
<!-- r1 t2 -->
<path d="M859 529 Q864 539,876 537 Q890 535,902 529" stroke="url(#sg2)" stroke-width="7"/>
<path d="M902 487 L873 510" stroke="#222" stroke-width="10.5" stroke-linecap="butt"/>
<path d="M900 491 L892 498" stroke="#555" stroke-width="3" stroke-linecap="butt"/>
<path d="M869.5 506 L864.5 523.5 L877 514 Z" fill="#151515" stroke-linejoin="round"/>
<!-- r1 t3 -->
<path d="M919 531 Q922 539,932 535 Q942 530,948 532 Q953 534,962 532" stroke="url(#sg3)" stroke-width="7" opacity=".85"/>
<path d="M962 487 L931 512" stroke="#c4c4c4" stroke-width="10" stroke-linecap="butt"/>
<path d="M962 487 L931 512" stroke="#e6e6e6" stroke-width="4" stroke-linecap="butt"/>
<path d="M961 491 L953 498" stroke="#999" stroke-width="2.5" stroke-linecap="butt"/>
<path d="M927.5 508 L926 523.5 L935 515 Z" fill="#f0f0f0" stroke="#999" stroke-width="0.8"/>
<path d="M927.5 508 L935 515" stroke="#b89a60" stroke-width="1.5"/>
<!-- r1 t4 -->
<path d="M979 532 Q985 527,993 532 Q1003 537,1010 531 Q1015 528,1022 530" stroke="#8f8f8f" stroke-width="7" opacity=".75"/>
<path d="M1022 487 L992 510" stroke="#777" stroke-width="10.5" stroke-linecap="butt"/>
<path d="M1021 491 L1013 498" stroke="#c8c8c8" stroke-width="2.5" stroke-linecap="butt"/>
<path d="M988.5 506 L986 523.5 L996 514 Z" fill="#e4e4e4" stroke="#888" stroke-width="0.8"/>
<!-- r2 t1 brush -->
<path d="M801 585 Q800 595,810 592 Q817 588,820 589 Q824 597,832 596 Q838 592,842 588" stroke="#2a2a2a" stroke-width="6"/>
<path d="M842 547 L830 555" stroke="#4a484a" stroke-width="5.5" stroke-linecap="butt"/>
<path d="M830 555 L814 570" stroke="#9a9a9a" stroke-width="5" stroke-linecap="butt"/>
<path d="M830 555 L814 570" stroke="#eee" stroke-width="1.5" stroke-linecap="butt"/>
<path d="M816 567 Q808 572,804 580 Q812 578,819 572 Z" fill="#3a1c1c" stroke="#2a1010" stroke-width="2" stroke-linejoin="round"/>
<!-- r2 t2 -->
<path d="M861 590 Q866 597,874 592 Q880 587,884 590 Q888 597,894 595 Q898 592,902 588" stroke="url(#sg5)" stroke-width="6"/>
<path d="M902 547 L890 555" stroke="#e8a030" stroke-width="5.5" stroke-linecap="butt"/>
<path d="M890 555 L874 570" stroke="#9a9a9a" stroke-width="5" stroke-linecap="butt"/>
<path d="M890 555 L874 570" stroke="#eee" stroke-width="1.5" stroke-linecap="butt"/>
<path d="M876 567 Q868 572,864 580 Q872 578,879 572 Z" fill="#7a4a30" stroke="#5a3020" stroke-width="2" stroke-linejoin="round"/>
<!-- r2 t3 selected -->
<path d="M915 596 Q925 590,931 589 Q933 592,928 597 Q936 599,957 588" stroke="#2a4a80" stroke-width="1.6"/>
<path d="M957 552 L944 560" stroke="#9a6a40" stroke-width="4" stroke-linecap="butt"/>
<path d="M944 560 L933 572" stroke="#5a8ac0" stroke-width="3.5" stroke-linecap="butt"/>
<path d="M934 571 Q929 575,926 581 Q932 579,937 574 Z" fill="#1a2a48" stroke="#1a2a48" stroke-width="1.5"/>
<!-- r2 t4 pencil -->
<path d="M1022 550 L995 567" stroke="#2f78c0" stroke-width="12" stroke-linecap="butt"/>
<path d="M1022 550 L995 567" stroke="#5aa0e0" stroke-width="3" stroke-linecap="butt"/>
<path d="M991 562 L985 582 L1000 571 Z" fill="#d8b080" stroke-linejoin="round"/>
<path d="M987 575 L985 582 L991 578 Z" fill="#333"/>
<path d="M985 600 L1020 582" stroke="#8a8a8a" stroke-width="9" opacity=".6" stroke-dasharray="1.5 1.5" stroke-linecap="butt"/>
<circle cx="980" cy="589" r="3.5" fill="#1a1a1a"/>
<path d="M977 594 L985 596" stroke="#444" stroke-width="3"/>
</g></svg>
<!-- presets scrollbar -->
<div class="a" style="left:1026px;top:470px;width:14px;height:137px;background:#3d3b3d"></div>
<div class="a" style="left:1026px;top:471px;width:13px;height:13px;border:1px solid #545254;background:#424042"></div>
<div class="a" style="left:1026px;top:487px;width:13px;height:26px;border:1px solid #545254;background:#3e3c3e"></div>
<div class="a" style="left:1026px;top:594px;width:13px;height:13px;border:1px solid #545254;background:#424042"></div>
<svg style="left:0;top:0" width="1042" height="640" fill="none" stroke="#dedede">
<path d="M1029 480 H1036 L1032.5 476 Z" fill="#aaa" stroke="none"/>
<path d="M1029 598.5 H1036 L1032.5 602.5 Z" fill="#aaa" stroke="none"/>
<path d="M921 455 H928.5 L924.75 459.5 Z" fill="#aaa" stroke="none"/>
<path d="M943 449.5 H951 V465 L947 461.5 L943 465 Z" stroke-width="1.5"/>
<path d="M983 462 H989 L986 465.5 Z" fill="#999" stroke="none"/>
<path d="M998 452 H1010 M998 457 H1010 M998 462 H1010" stroke="#e8e8e8" stroke-width="2"/>
<path d="M1029 451 V459" stroke="#bbb" stroke-width="1.2" stroke-dasharray="1.2 1"/>
</svg>
<!-- search row -->
<div class="a" style="left:780px;top:609px;width:130px;height:21px;background:#3d3b3d;border-radius:2px"></div>
<div class="t" style="left:783px;top:615px;font-size:11px;letter-spacing:0.4px;color:#7a7979">搜索</div>
<div class="a" style="left:916px;top:613px;width:14px;height:14px;background:#3d3b3d;border-radius:2px"></div>
<svg style="left:0;top:0" width="1042" height="640"><path d="M919 620 L922 624.5 L927.5 615" fill="none" stroke="#e0e0e0" stroke-width="1.6"/></svg>
<div class="t" style="left:935px;top:615px;font-size:11.2px;color:#e0e0e0">仅在当前标签内搜索</div>
<!-- ===== STATUS BAR ===== -->
<div class="a" style="left:9px;top:642px;width:14px;height:14px;border:1.3px solid #dedede"></div>
<svg style="left:0;top:0" width="1042" height="666"><circle cx="16" cy="649" r="4" fill="none" stroke="#dedede" stroke-width="1.2" stroke-dasharray="1.2 1.4"/></svg>
<div class="t" style="left:38px;top:644px;font-size:12.8px;color:#dcdcdc">b) Ba...tails</div>
<div class="t" style="left:124px;top:644px;font-size:12.5px;color:#dcdcdc">RGB/透明...rc.icc</div>
<div class="a" style="left:532px;top:638px;width:146px;height:24px;border:1px solid #595759;border-radius:2px;background:#494749"></div>
<div class="t" style="left:535px;top:643px;font-size:12.6px;color:#dcdcdc">2,480 <u>x</u> 3,508 (34.6 MiB)</div>
<div class="a" style="left:685px;top:638px;width:23px;height:23px;border-radius:50%;background:#2f2e2e"></div>
<svg style="left:0;top:0" width="1042" height="666">
<path d="M692 649.5 H702" stroke="#e0e0e0" stroke-width="1.2"/>
<circle cx="692" cy="649.5" r="1.3" fill="#e0e0e0"/><circle cx="702" cy="649.5" r="1.3" fill="#e0e0e0"/>
</svg>
<div class="t" style="left:742px;top:644px;font-size:12px;color:#dcdcdc">0.00°</div>
<div class="t" style="left:852px;top:644px;font-size:12px;color:#dcdcdc">100.0%</div>
<div class="a" style="left:911px;top:648px;width:80px;height:3px;border-radius:2px;background:#2f2e2e"></div>
<div class="a" style="left:911px;top:648px;width:30px;height:3px;border-radius:2px;background:#6a8aaa"></div>
<div class="a" style="left:937px;top:644px;width:11px;height:11px;border-radius:2px;background:#4e4c4e;border:1px solid #2e2d2d"></div>
<div class="a" style="left:994px;top:639px;width:22px;height:21px;border:1px solid #595759;border-radius:2px;background:#444244"></div>
<div class="a" style="left:999px;top:643px;width:12px;height:13px;border:1.5px solid #e0e0e0"></div>
<div class="a" style="left:1003px;top:647px;width:4px;height:4px;background:#e0e0e0"></div>
<svg style="left:0;top:0" width="1042" height="666" fill="#8a8989">
<rect x="1036" y="655" width="2" height="2"/><rect x="1033" y="658" width="2" height="2"/><rect x="1036" y="658" width="2" height="2"/><rect x="1030" y="661" width="2" height="2"/><rect x="1033" y="661" width="2" height="2"/><rect x="1036" y="661" width="2" height="2"/>
</svg>
</body></html>
